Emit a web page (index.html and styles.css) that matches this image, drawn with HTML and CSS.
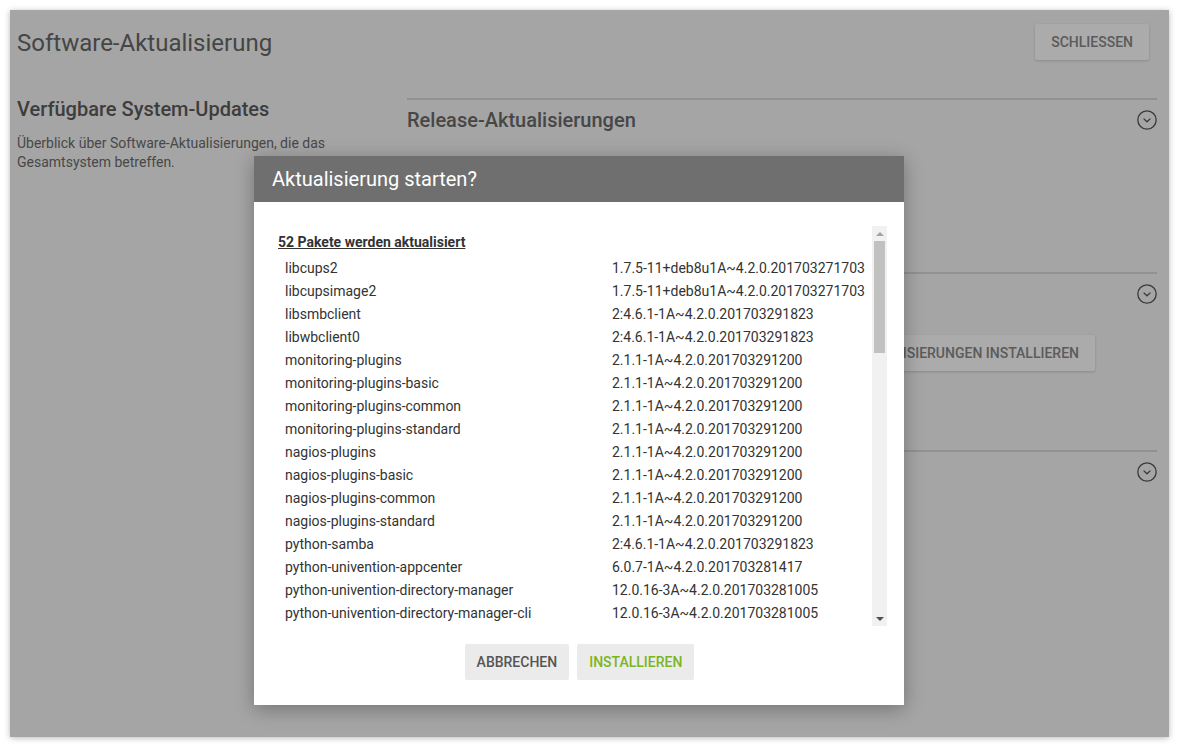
FILE: index.html
```html
<!DOCTYPE html>
<html lang="de">
<head>
<meta charset="utf-8">
<title>Software-Aktualisierung</title>
<link rel="stylesheet" href="styles.css">
</head>
<body>
<div class="card">
  <div class="card-inner">
    <header class="page-header">
      <h1 class="page-title">Software-Aktualisierung</h1>
      <button class="btn btn-raised">Schließen</button>
    </header>
    <main class="main">
      <aside class="intro">
        <h2 class="intro-title">Verfügbare System-Updates</h2>
        <p class="intro-text">Überblick über Software-Aktualisierungen, die das Gesamtsystem betreffen.</p>
      </aside>
      <div class="sections">
        <section class="section section-release">
          <div class="section-head">
            <h3 class="section-title">Release-Aktualisierungen</h3>
            <svg class="chev" width="20" height="20" viewBox="0 0 20 20"><circle cx="10" cy="10" r="9.2" fill="none" stroke="#555" stroke-width="1.3"/><polyline points="6.6,8.6 10,11.8 13.4,8.6" fill="none" stroke="#555" stroke-width="1.3"/></svg>
          </div>
          <div class="section-body">
            <p class="section-text">Das System ist auf dem aktuellen Stand.</p>
          </div>
        </section>
        <section class="section section-packages">
          <div class="section-head">
            <h3 class="section-title">Paket-Aktualisierungen</h3>
            <svg class="chev" width="20" height="20" viewBox="0 0 20 20"><circle cx="10" cy="10" r="9.2" fill="none" stroke="#555" stroke-width="1.3"/><polyline points="6.6,8.6 10,11.8 13.4,8.6" fill="none" stroke="#555" stroke-width="1.3"/></svg>
          </div>
          <div class="section-body section-body-btn">
            <button class="btn btn-raised btn-wide">Paket-Aktualisierungen installieren</button>
          </div>
        </section>
        <section class="section section-apps">
          <div class="section-head">
            <h3 class="section-title">App Center-Aktualisierungen</h3>
            <svg class="chev" width="20" height="20" viewBox="0 0 20 20"><circle cx="10" cy="10" r="9.2" fill="none" stroke="#555" stroke-width="1.3"/><polyline points="6.6,8.6 10,11.8 13.4,8.6" fill="none" stroke="#555" stroke-width="1.3"/></svg>
          </div>
        </section>
      </div>
    </main>
  </div>
  <div class="overlay"></div>
  <div class="dialog">
    <div class="dialog-head">Aktualisierung starten?</div>
    <div class="dialog-body">
      <div class="scrollbox">
        <div class="list">
          <div class="list-heading">52 Pakete werden aktualisiert</div>
          <div class="row"><span>libcups2</span><span>1.7.5-11+deb8u1A~4.2.0.201703271703</span></div>
          <div class="row"><span>libcupsimage2</span><span>1.7.5-11+deb8u1A~4.2.0.201703271703</span></div>
          <div class="row"><span>libsmbclient</span><span>2:4.6.1-1A~4.2.0.201703291823</span></div>
          <div class="row"><span>libwbclient0</span><span>2:4.6.1-1A~4.2.0.201703291823</span></div>
          <div class="row"><span>monitoring-plugins</span><span>2.1.1-1A~4.2.0.201703291200</span></div>
          <div class="row"><span>monitoring-plugins-basic</span><span>2.1.1-1A~4.2.0.201703291200</span></div>
          <div class="row"><span>monitoring-plugins-common</span><span>2.1.1-1A~4.2.0.201703291200</span></div>
          <div class="row"><span>monitoring-plugins-standard</span><span>2.1.1-1A~4.2.0.201703291200</span></div>
          <div class="row"><span>nagios-plugins</span><span>2.1.1-1A~4.2.0.201703291200</span></div>
          <div class="row"><span>nagios-plugins-basic</span><span>2.1.1-1A~4.2.0.201703291200</span></div>
          <div class="row"><span>nagios-plugins-common</span><span>2.1.1-1A~4.2.0.201703291200</span></div>
          <div class="row"><span>nagios-plugins-standard</span><span>2.1.1-1A~4.2.0.201703291200</span></div>
          <div class="row"><span>python-samba</span><span>2:4.6.1-1A~4.2.0.201703291823</span></div>
          <div class="row"><span>python-univention-appcenter</span><span>6.0.7-1A~4.2.0.201703281417</span></div>
          <div class="row"><span>python-univention-directory-manager</span><span>12.0.16-3A~4.2.0.201703281005</span></div>
          <div class="row"><span>python-univention-directory-manager-cli</span><span>12.0.16-3A~4.2.0.201703281005</span></div>
          <div class="row"><span>python-univention-directory-manager-uvmm</span><span>12.0.16-3A~4.2.0.201703281005</span></div>
          <div class="row"><span>python-univention-lib</span><span>9.0.4-2A~4.2.0.201703281103</span></div>
        </div>
        <div class="scrollbar">
          <div class="sb-btn sb-up"><span class="tri-up"></span></div>
          <div class="sb-track"><div class="sb-thumb"></div></div>
          <div class="sb-btn sb-down"><span class="tri-down"></span></div>
        </div>
      </div>
      <div class="dialog-actions">
        <button class="btn btn-flat">Abbrechen</button>
        <button class="btn btn-flat btn-primary">Installieren</button>
      </div>
    </div>
  </div>
</div>
</body>
</html>
```
FILE: styles.css
```css
* { box-sizing: border-box; }
html, body { margin: 0; padding: 0; background: #fff; }
body {
  font-family: Roboto, "Liberation Sans", sans-serif;
  width: 1179px;
  height: 747px;
  padding: 10px;
  overflow: hidden;
}
.card {
  position: relative;
  width: 1159px;
  height: 727px;
  background: #f7f7f7;
  box-shadow: 0 1px 6px rgba(0,0,0,0.28);
  overflow: hidden;
}
.card-inner { padding: 14px 12px 0 7px; }
.page-header {
  display: flex;
  justify-content: space-between;
  align-items: center;
  height: 36px;
  margin-right: 8px;
}
.page-title {
  margin: 0;
  padding-top: 2px;
  font-size: 24px;
  font-weight: 400;
  color: #686868;
  line-height: 36px;
}
.btn {
  font-family: Roboto, "Liberation Sans", sans-serif;
  font-size: 14px;
  font-weight: 500;
  text-transform: uppercase;
  border: none;
  border-radius: 2px;
  height: 36px;
  padding: 0 16px;
  cursor: pointer;
}
.btn-raised {
  background: #fff;
  color: #888;
  box-shadow: 0 1px 3px rgba(0,0,0,0.18);
}
.main {
  display: flex;
  gap: 30px;
  margin-top: 38px;
}
.intro { width: 360px; flex: none; }
.intro-title {
  margin: 0;
  font-size: 20px;
  font-weight: 500;
  color: #5c5c5c;
  line-height: 22px;
}
.intro-text {
  margin: 14px 0 0;
  font-size: 14px;
  line-height: 19px;
  color: #6c6c6c;
}
.sections { flex: 1; }
.section { border-top: 2px solid #d8d8d8; }
.section-head {
  display: flex;
  justify-content: space-between;
  align-items: center;
  height: 40px;
}
.section-title {
  margin: 0;
  font-size: 20px;
  font-weight: 500;
  color: #6a6a6a;
}
.chev { display: block; }
.section-body { height: 132px; padding-top: 40px; }
.section-text { margin: 0; font-size: 14px; color: #666; }
.section-body-btn {
  height: 136px;
  display: flex;
  justify-content: flex-end;
  align-items: flex-start;
  padding: 21px 62px 0 0;
}
.btn-wide { color: #888; }
.overlay {
  position: absolute;
  inset: 0;
  background: rgba(0,0,0,0.33);
}
.dialog {
  position: absolute;
  left: 244px;
  top: 146px;
  width: 650px;
  height: 549px;
  background: #fff;
  box-shadow: 0 4px 18px rgba(0,0,0,0.3);
  display: flex;
  flex-direction: column;
}
.dialog-head {
  height: 46px;
  flex: none;
  background: #6f6f6f;
  color: #fff;
  font-size: 20px;
  font-weight: 400;
  line-height: 46px;
  padding-left: 18px;
}
.dialog-body {
  flex: 1;
  padding: 24px 17px 0 18px;
  display: flex;
  flex-direction: column;
}
.scrollbox {
  display: flex;
  height: 400px;
  flex: none;
}
.list {
  flex: 1;
  overflow: hidden;
  padding-top: 8px;
}
.list-heading {
  padding-left: 6px;
  font-size: 14px;
  font-weight: 700;
  line-height: 16px;
  color: #333;
  text-decoration: underline;
  margin-bottom: 6px;
}
.row {
  display: grid;
  grid-template-columns: 327px 1fr;
  padding-left: 13px;
  height: 23px;
  align-items: center;
  font-size: 14px;
  color: #333;
  white-space: nowrap;
}
.scrollbar {
  width: 15px;
  flex: none;
  background: #f1f1f1;
  display: flex;
  flex-direction: column;
}
.sb-btn {
  height: 15px;
  flex: none;
  display: flex;
  align-items: center;
  justify-content: center;
}
.tri-up {
  width: 0; height: 0;
  border-left: 4px solid transparent;
  border-right: 4px solid transparent;
  border-bottom: 4px solid #a3a3a3;
}
.tri-down {
  width: 0; height: 0;
  border-left: 4px solid transparent;
  border-right: 4px solid transparent;
  border-top: 4px solid #505050;
}
.sb-track { flex: 1; padding: 0 2px; }
.sb-thumb {
  height: 112px;
  background: #c1c1c1;
}
.dialog-actions {
  display: flex;
  justify-content: center;
  gap: 8px;
  margin-top: 18px;
}
.btn-flat {
  background: #ebebeb;
  color: #555;
  padding: 0 12px;
}
.btn-primary { color: #7ab51d; }
```
